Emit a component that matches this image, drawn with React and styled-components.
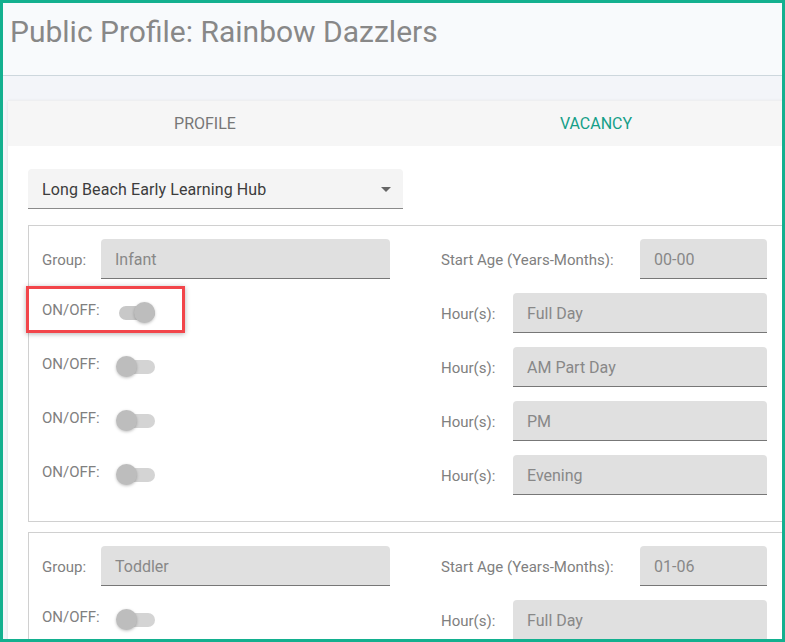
import React from 'react';
import styled, { createGlobalStyle } from 'styled-components';

const GlobalStyle = createGlobalStyle`
  html, body {
    margin: 0;
    padding: 0;
    overflow: hidden;
    font-family: Roboto, 'Liberation Sans', sans-serif;
  }
`;

const Frame = styled.div`
  box-sizing: border-box;
  width: 785px;
  height: 642px;
  border: 3px solid #13b08f;
  background: #f3f5f9;
  overflow: hidden;
`;

const Header = styled.header`
  height: 73px;
  background: #f8fafc;
  border-bottom: 1px solid #cdd7dd;
  padding: 11px 0 0 7px;
  box-sizing: border-box;
`;

const Title = styled.h1`
  margin: 0;
  font-size: 30px;
  line-height: 36px;
  font-weight: 400;
  color: #888;
`;

const Body = styled.div`
  padding: 24px 0 0 5px;
`;

const Card = styled.div`
  width: 820px;
  background: #fff;
  box-shadow: 0 1px 3px rgba(0, 0, 0, 0.1);
`;

const Tabs = styled.div`
  display: flex;
  height: 45px;
  background: #f6f6f6;
  border-top: 1px solid #eeeff1;
`;

const Tab = styled.div`
  flex: 0 0 ${(p) => p.$w}px;
  display: flex;
  align-items: center;
  justify-content: center;
  font-size: 16px;
  text-transform: uppercase;
  color: ${(p) => (p.$active ? '#149f88' : '#777')};
`;

const Content = styled.div`
  padding: 23px 0 0 20px;
`;

const Select = styled.div`
  box-sizing: border-box;
  width: 375px;
  height: 40px;
  display: flex;
  align-items: center;
  justify-content: space-between;
  padding: 1px 12px 0 14px;
  background: #f4f4f4;
  border-bottom: 1px solid #8a8a8a;
  border-radius: 4px 4px 0 0;
  font-size: 16px;
  letter-spacing: 0.1px;
  color: #3c3c3c;
`;

const Arrow = styled.span`
  width: 0;
  height: 0;
  border-left: 5px solid transparent;
  border-right: 5px solid transparent;
  border-top: 5px solid #666;
`;

const GroupBox = styled.section`
  box-sizing: border-box;
  width: 800px;
  margin-top: ${(p) => p.$gap}px;
  border: 1px solid #d0d0d0;
  padding: 13px 0 26px 13px;
  display: grid;
  grid-template-columns: 399px 326px;
  row-gap: 14px;
`;

const Cell = styled.div`
  position: relative;
  display: flex;
  align-items: center;
  height: 40px;
`;

const Label = styled.span`
  flex: 0 0 ${(p) => p.$w}px;
  padding: ${(p) => (p.$raised ? '0 0 6px' : '1px 0 0')};
  font-size: 15px;
  color: #808080;
`;

const Field = styled.div`
  box-sizing: border-box;
  width: ${(p) => p.$w}px;
  height: 40px;
  display: flex;
  align-items: center;
  padding: 1px 0 0 14px;
  background: #e0e0e0;
  border-bottom: 1px solid #777;
  border-radius: 4px 4px 0 0;
  font-size: 16px;
  color: #888;
`;

const Switch = styled.div`
  position: relative;
  width: 40px;
  height: 22px;
`;

const Track = styled.div`
  position: absolute;
  left: 3px;
  right: 1px;
  top: 4px;
  height: 14px;
  border-radius: 7px;
  background: ${(p) => (p.$on ? '#c8c8c8' : '#d4d4d4')};
`;

const Thumb = styled.div`
  position: absolute;
  top: 0;
  left: ${(p) => (p.$on ? '18px' : '0')};
  width: 21px;
  height: 21px;
  border-radius: 50%;
  background: #bdbdbd;
  box-shadow: 0 1px 3px rgba(0, 0, 0, 0.25);
`;

const Highlight = styled.div`
  position: absolute;
  left: -16px;
  top: -7px;
  width: 159px;
  height: 47px;
  box-sizing: border-box;
  border: 3px solid #f2454a;
  box-shadow: 0 1px 5px rgba(0, 0, 0, 0.3);
  pointer-events: none;
`;

function Toggle({ on }) {
  return (
    <Switch>
      <Track $on={on} />
      <Thumb $on={on} />
    </Switch>
  );
}

const groups = [
  {
    name: 'Infant',
    age: '00-00',
    hours: [
      { label: 'Full Day', on: true, marked: true },
      { label: 'AM Part Day', on: false },
      { label: 'PM', on: false },
      { label: 'Evening', on: false },
    ],
  },
  {
    name: 'Toddler',
    age: '01-06',
    hours: [
      { label: 'Full Day', on: false },
      { label: 'AM Part Day', on: false },
      { label: 'PM', on: false },
      { label: 'Evening', on: false },
    ],
  },
];

function Group({ group, gap }) {
  return (
    <GroupBox $gap={gap}>
      <Cell>
        <Label $w={59}>Group:</Label>
        <Field $w={289}>{group.name}</Field>
      </Cell>
      <Cell>
        <Label $w={199}>Start Age (Years-Months):</Label>
        <Field $w={127}>{group.age}</Field>
      </Cell>
      {group.hours.map((h, i) => (
        <React.Fragment key={i}>
          <Cell>
            <Label $w={74} $raised>ON/OFF:</Label>
            <Toggle on={h.on} />
            {h.marked && <Highlight />}
          </Cell>
          <Cell>
            <Label $w={72}>Hour(s):</Label>
            <Field $w={254}>{h.label}</Field>
          </Cell>
        </React.Fragment>
      ))}
    </GroupBox>
  );
}

export default function App() {
  return (
    <>
      <GlobalStyle />
      <Frame>
        <Header>
          <Title>Public Profile: Rainbow Dazzlers</Title>
        </Header>
        <Body>
          <Card>
            <Tabs>
              <Tab $w={394}>Profile</Tab>
              <Tab $w={388} $active>Vacancy</Tab>
            </Tabs>
            <Content>
              <Select>
                Long Beach Early Learning Hub
                <Arrow />
              </Select>
              {groups.map((g, i) => (
                <Group key={g.name} group={g} gap={i === 0 ? 16 : 10} />
              ))}
            </Content>
          </Card>
        </Body>
      </Frame>
    </>
  );
}
